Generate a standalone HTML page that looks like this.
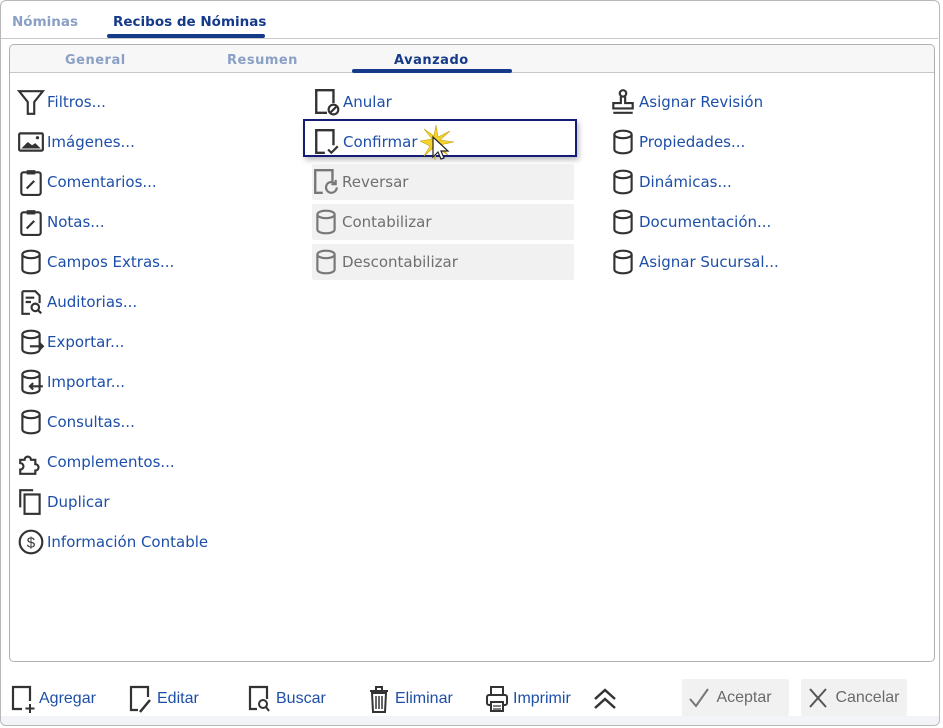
<!DOCTYPE html>
<html><head><meta charset="utf-8"><style>
*{box-sizing:border-box;margin:0;padding:0}
body{width:943px;height:728px;background:#fff;font-family:"DejaVu Sans","Liberation Sans",sans-serif;position:relative;overflow:hidden}
.frame{position:absolute;left:0;top:0;width:940px;height:726px;border:1px solid #b8b8b8;border-radius:6px;background:#fff}
.toptabs{position:absolute;left:1px;top:1px;width:937px;height:38px;border-bottom:1px solid #c8c8c8}
.tab{position:absolute;top:13px;font-size:13.5px;font-weight:bold}
.panel{position:absolute;left:9px;top:44px;width:926px;height:618px;border:1px solid #b0b0b0;border-radius:5px;background:#fff}
.subtabs{position:absolute;left:0;top:0;width:924px;height:28px;background:#f7f7f7;border-bottom:1px solid #c8c8c8;border-radius:5px 5px 0 0}
.st{position:absolute;top:8px;font-size:13px;font-weight:bold;color:#8aa0c4;letter-spacing:.5px}
.item{position:absolute;height:36px;display:flex;align-items:center;font-size:15px;color:#1d4fa8}
.item svg{width:28px;height:28px;margin-right:2px;flex:none}
.dis{background:#f1f1f1;color:#6f6f6f;border-radius:2px}
.bot{position:absolute;top:684px;height:30px;display:flex;align-items:center;font-family:"Liberation Sans",sans-serif;font-size:16px;color:#1d4fa8}
.bot svg{width:26px;height:30px;margin-right:3px}
.btn{position:absolute;top:679px;height:37px;background:#f1f1f1;border-radius:2px;display:flex;align-items:center;font-family:"Liberation Sans",sans-serif;font-size:16px;color:#6a6a6a;padding-left:4px}
</style></head><body>
<div class="frame"></div>
<div class="toptabs">
<div class="tab" style="left:11px;color:#8aa0c4">Nóminas</div>
<div class="tab" style="left:112px;color:#163a8a">Recibos de Nóminas</div>
<div style="position:absolute;left:106px;top:33px;width:158px;height:4px;background:#163a8a;border-radius:2px"></div>
</div>
<div class="panel">
<div class="subtabs">
<div class="st" style="left:55px">General</div>
<div class="st" style="left:217px">Resumen</div>
<div class="st" style="left:384px;color:#163a8a">Avanzado</div>
<div style="position:absolute;left:342px;top:24px;width:160px;height:4px;background:#163a8a;border-radius:2px"></div>
</div>
</div>
<svg width="0" height="0" style="position:absolute"><defs>
<g id="cyl"><ellipse cx="13" cy="6" rx="8" ry="3.5" fill="none" stroke="#333" stroke-width="2"/><path d="M5 6v14c0 2 3.5 3.5 8 3.5s8-1.5 8-3.5V6" fill="none" stroke="#333" stroke-width="2"/></g>
<g id="cylg"><ellipse cx="13" cy="6" rx="8" ry="3.5" fill="none" stroke="#777" stroke-width="2"/><path d="M5 6v14c0 2 3.5 3.5 8 3.5s8-1.5 8-3.5V6" fill="none" stroke="#777" stroke-width="2"/></g>
<g id="clip"><rect x="4" y="4" width="18" height="21" rx="2" fill="none" stroke="#333" stroke-width="2"/><rect x="9" y="2" width="8" height="4" fill="#333"/><path d="M9 19l7-7" stroke="#333" stroke-width="2"/></g>
</defs></svg>
<div class="item" style="left:17px;top:84px"><svg viewBox="0 0 26 26"><path d="M2 3h22l-8 10v11h-6V13z" fill="none" stroke="#333" stroke-width="2"/></svg>Filtros...</div>
<div class="item" style="left:17px;top:124px"><svg viewBox="0 0 26 26"><rect x="2" y="5" width="22" height="16" rx="1" fill="none" stroke="#333" stroke-width="2"/><path d="M4 19l6-6 4 3 3-2 5 5z" fill="#333"/><circle cx="19" cy="9" r="1.5" fill="#333"/></svg>Imágenes...</div>
<div class="item" style="left:17px;top:164px"><svg viewBox="0 0 26 26"><use href="#clip"/></svg>Comentarios...</div>
<div class="item" style="left:17px;top:204px"><svg viewBox="0 0 26 26"><use href="#clip"/></svg>Notas...</div>
<div class="item" style="left:17px;top:244px"><svg viewBox="0 0 26 26"><use href="#cyl"/></svg>Campos Extras...</div>
<div class="item" style="left:17px;top:284px"><svg viewBox="0 0 26 26"><path d="M5 3h12l4 4v7M12 24H5V3" fill="none" stroke="#333" stroke-width="2"/><path d="M8 9h8M8 13h5" stroke="#333" stroke-width="2"/><circle cx="17" cy="18" r="3.5" fill="none" stroke="#333" stroke-width="2"/><path d="M19.5 20.5l3 3" stroke="#333" stroke-width="2"/></svg>Auditorias...</div>
<div class="item" style="left:17px;top:324px"><svg viewBox="0 0 26 26"><use href="#cyl"/><path d="M12 17h12m-3-3l3 3-3 3" fill="none" stroke="#333" stroke-width="2"/></svg>Exportar...</div>
<div class="item" style="left:17px;top:364px"><svg viewBox="0 0 26 26"><use href="#cyl"/><path d="M24 17H12m3-3l-3 3 3 3" fill="none" stroke="#333" stroke-width="2"/></svg>Importar...</div>
<div class="item" style="left:17px;top:404px"><svg viewBox="0 0 26 26"><use href="#cyl"/></svg>Consultas...</div>
<div class="item" style="left:17px;top:444px"><svg viewBox="0 0 26 26"><path d="M3 11h4a3 3 0 1 1 6 0h4v4a3 3 0 1 1 0 6v3H3v-4a3 3 0 1 0 0-6z" fill="none" stroke="#333" stroke-width="2"/></svg>Complementos...</div>
<div class="item" style="left:17px;top:484px"><svg viewBox="0 0 26 26"><path d="M3 18V2h12" fill="none" stroke="#333" stroke-width="2"/><rect x="7" y="6" width="14" height="18" fill="none" stroke="#333" stroke-width="2"/></svg>Duplicar</div>
<div class="item" style="left:17px;top:524px"><svg viewBox="0 0 26 26"><circle cx="13" cy="13" r="10.5" fill="none" stroke="#333" stroke-width="2"/><text x="13" y="18" font-size="14" text-anchor="middle" fill="#333" font-family="Liberation Sans">$</text></svg>Información Contable</div>
<div class="item" style="left:313px;top:84px"><svg viewBox="0 0 26 26"><path d="M13 23H3V2h16v12" fill="none" stroke="#333" stroke-width="2.2"/><circle cx="19" cy="20" r="4.5" fill="none" stroke="#333" stroke-width="2"/><path d="M16 23l6-6" stroke="#333" stroke-width="2"/></svg>Anular</div>
<div style="position:absolute;left:303px;top:119px;width:274px;height:38px;border:2px solid #141c78;box-shadow:2px 3px 5px rgba(0,0,0,.25)"></div>
<div class="item" style="left:313px;top:124px"><svg viewBox="0 0 26 26"><path d="M11 23H3V2h16v14" fill="none" stroke="#333" stroke-width="2.2"/><path d="M14 20l3 3 6-6" fill="none" stroke="#333" stroke-width="2"/></svg>Confirmar</div>
<svg style="position:absolute;left:420px;top:123px" width="36" height="44" viewBox="0 0 36 44"><path d="M16 2l2 12 12-6-10 9 14 2-14 3 8 10-11-7-2 12-2-12-9 8 6-10L0 18l12-2L4 6l10 7z" fill="#f4d32a" stroke="#c9a010" stroke-width=".6"/><path d="M13 14v20l5-5 3 7 3-1-3-7h7z" fill="#fff" stroke="#222" stroke-width="1.2"/></svg>
<div class="item dis" style="left:312px;top:164px;width:262px"><svg viewBox="0 0 26 26"><path d="M10 23H3V2h16v10" fill="none" stroke="#777" stroke-width="2.2"/><path d="M23 18a5 5 0 1 1-2-4" fill="none" stroke="#777" stroke-width="2"/><path d="M22 11v4h-4" fill="none" stroke="#777" stroke-width="2"/></svg>Reversar</div>
<div class="item dis" style="left:312px;top:204px;width:262px"><svg viewBox="0 0 26 26"><use href="#cylg"/></svg>Contabilizar</div>
<div class="item dis" style="left:312px;top:244px;width:262px"><svg viewBox="0 0 26 26"><use href="#cylg"/></svg>Descontabilizar</div>
<div class="item" style="left:609px;top:84px"><svg viewBox="0 0 26 26"><circle cx="13" cy="5" r="3" fill="none" stroke="#333" stroke-width="2"/><path d="M11 8v6H4v5h18v-5h-7V8M4 23h18" fill="none" stroke="#333" stroke-width="2"/></svg>Asignar Revisión</div>
<div class="item" style="left:609px;top:124px"><svg viewBox="0 0 26 26"><use href="#cyl"/></svg>Propiedades...</div>
<div class="item" style="left:609px;top:164px"><svg viewBox="0 0 26 26"><use href="#cyl"/></svg>Dinámicas...</div>
<div class="item" style="left:609px;top:204px"><svg viewBox="0 0 26 26"><use href="#cyl"/></svg>Documentación...</div>
<div class="item" style="left:609px;top:244px"><svg viewBox="0 0 26 26"><use href="#cyl"/></svg>Asignar Sucursal...</div>
<div style="position:absolute;left:1px;top:716px;width:938px;height:9px;background:#f2f4f7;border-radius:0 0 6px 6px"></div>
<div class="bot" style="left:10px"><svg viewBox="0 0 26 30"><path d="M12 25H3V3h17v14" fill="none" stroke="#333" stroke-width="2.2"/><path d="M20 20v9M15.5 24.5h9" stroke="#333" stroke-width="2"/></svg>Agregar</div>
<div class="bot" style="left:128px"><svg viewBox="0 0 26 30"><path d="M10 26H3V3h17v10" fill="none" stroke="#333" stroke-width="2.2"/><path d="M12 28l10-12" stroke="#333" stroke-width="2.5"/></svg>Editar</div>
<div class="bot" style="left:247px"><svg viewBox="0 0 26 30"><path d="M10 25H3V3h17v12" fill="none" stroke="#333" stroke-width="2.2"/><circle cx="16" cy="20" r="4" fill="none" stroke="#333" stroke-width="2"/><path d="M19 23l3 4" stroke="#333" stroke-width="2"/></svg>Buscar</div>
<div class="bot" style="left:366px"><svg viewBox="0 0 26 30"><path d="M4 7h18M10 7V3h6v4M6 9h14l-1 19H7z" fill="none" stroke="#333" stroke-width="2"/><path d="M10 12v13M13 12v13M16 12v13" stroke="#333" stroke-width="1.5"/></svg>Eliminar</div>
<div class="bot" style="left:484px"><svg viewBox="0 0 26 30"><rect x="7" y="3" width="12" height="8" fill="none" stroke="#333" stroke-width="2"/><rect x="3" y="11" width="20" height="10" rx="2" fill="none" stroke="#333" stroke-width="2"/><rect x="7" y="18" width="12" height="9" fill="#fff" stroke="#333" stroke-width="2"/><path d="M9 22h8M9 25h8" stroke="#333" stroke-width="1.2"/></svg>Imprimir</div>
<svg style="position:absolute;left:591px;top:687px" width="28" height="24" viewBox="0 0 28 24"><path d="M4 12l10-9 10 9M4 21l10-9 10 9" fill="none" stroke="#333" stroke-width="2.5"/></svg>
<div class="btn" style="left:682px;width:107px"><svg width="26" height="26" viewBox="0 0 26 26"><path d="M4 14l6 7L22 4" fill="none" stroke="#777" stroke-width="2"/></svg>&nbsp;Aceptar</div>
<div class="btn" style="left:801px;width:106px"><svg width="26" height="26" viewBox="0 0 26 26"><path d="M5 4l16 18M21 4L5 22" fill="none" stroke="#555" stroke-width="2"/></svg>&nbsp;Cancelar</div>
</body></html>
